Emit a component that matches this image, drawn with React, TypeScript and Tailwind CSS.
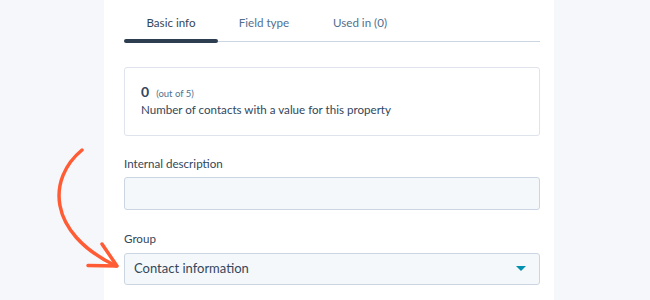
import React from "react";

export default function App() {
  return (
    <div className="relative w-[650px] h-[300px] bg-[#f5f7fb] overflow-hidden" style={{ fontFamily: "Lato, 'Open Sans', sans-serif" }}>
      <div className="ml-[104px] w-[450px] h-[300px] bg-white px-[20px] pr-[14px] text-[#33475b]">
        <div className="flex h-[42px] border-b border-[#cbd6e2] text-[11.6px] relative">
          <div className="w-[94px] flex justify-center pt-[14px] relative text-[#33475b]">
            Basic info
            <div className="absolute left-0 right-0 bottom-[-2px] h-[4px] rounded-full bg-[#2d3e50]" />
          </div>
          <div className="w-[92px] flex justify-center pt-[14px] text-[#516f90]">Field type</div>
          <div className="w-[100px] flex justify-center pt-[14px] text-[#516f90]">Used in (0)</div>
        </div>
        <div className="mt-[25px] h-[69px] border border-[#dfe3eb] rounded-[3px] px-[16px] pt-[15px]">
          <div className="flex items-baseline gap-[7px]">
            <span className="text-[14px] font-bold leading-[18px]">0</span>
            <span className="text-[9.5px] text-[#516f90]">(out of 5)</span>
          </div>
          <div className="text-[11.6px] leading-[18px]">Number of contacts with a value for this property</div>
        </div>
        <div className="mt-[20px] text-[11.6px] leading-[16px]">Internal description</div>
        <div className="mt-[5px] h-[33px] bg-[#f5f8fa] border border-[#cbd6e2] rounded-[3px]" />
        <div className="mt-[21px] text-[11.6px] leading-[16px]">Group</div>
        <div className="mt-[6px] h-[32px] bg-[#f5f8fa] border border-[#cbd6e2] rounded-[3px] flex items-center pl-[9px] pr-[13px] justify-between">
          <span className="text-[13px]">Contact information</span>
          <svg width="10" height="6" viewBox="0 0 10 6"><path d="M0 0 L10 0 L5 5 Z" fill="#0091ae" /></svg>
        </div>
      </div>
      <svg className="absolute left-0 top-0" width="650" height="300" viewBox="0 0 650 300" fill="none">
        <path d="M82 150 C 48 178, 46 232, 116 266" stroke="#ff5c35" strokeWidth="3.5" strokeLinecap="round" />
        <path d="M102 244 L117 266 L88 265.5" stroke="#ff5c35" strokeWidth="3.5" strokeLinecap="round" strokeLinejoin="round" />
      </svg>
    </div>
  );
}
